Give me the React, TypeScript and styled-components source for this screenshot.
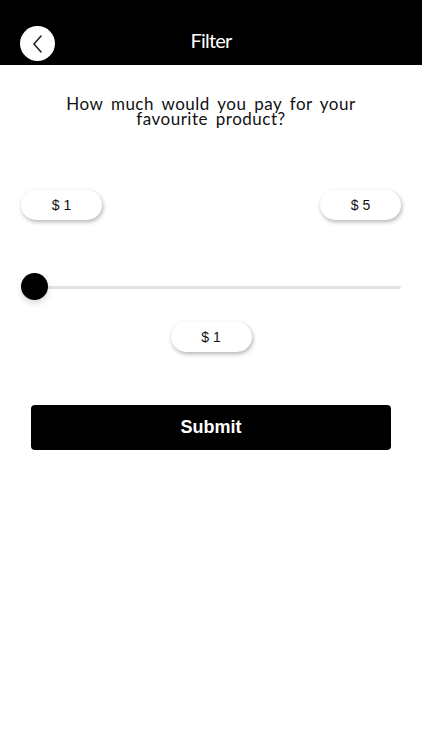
import styled, { createGlobalStyle } from 'styled-components'

const GlobalStyle = createGlobalStyle`
  html, body {
    margin: 0;
    padding: 0;
    background: #fff;
  }
  body {
    font-family: "Liberation Sans", Arial, sans-serif;
  }
`

const Header = styled.header`
  height: 65px;
  background: #000;
  display: grid;
  grid-template-columns: 74px 1fr 74px;
  align-items: end;
  padding-bottom: 4px;
  box-sizing: border-box;
`

const BackButton = styled.button`
  width: 35px;
  height: 35px;
  margin-left: 20px;
  border-radius: 50%;
  border: none;
  background: #fff;
  display: flex;
  align-items: center;
  justify-content: center;
  padding: 0;
`

const Title = styled.h1`
  margin: 0 0 3px;
  line-height: 35px;
  text-align: center;
  color: #fff;
  font-family: "Lato", sans-serif;
  font-weight: 400;
  font-size: 20px;
  letter-spacing: -0.8px;
`

const Question = styled.p`
  margin: 31px auto 0;
  width: 310px;
  text-align: center;
  font-family: "Lato", sans-serif;
  font-size: 17px;
  line-height: 15px;
  letter-spacing: 0.5px;
  word-spacing: 3px;
  color: #111;
`

const Range = styled.div`
  display: flex;
  justify-content: space-between;
  padding: 0 21px;
  margin-top: 64px;
`

const Pill = styled.div`
  width: 81px;
  height: 30px;
  border-radius: 15px;
  background: #fff;
  box-shadow: 1px 2px 4px rgba(0, 0, 0, 0.3);
  display: flex;
  align-items: center;
  justify-content: center;
  font-size: 14px;
  color: #111;
`

const Slider = styled.div`
  position: relative;
  margin: 53px 21px 0;
  height: 28px;
  display: flex;
  align-items: center;
`

const Track = styled.div`
  flex: 1;
  margin-left: 13px;
  height: 3px;
  background: #e3e3e3;
  border-radius: 2px;
`

const Thumb = styled.div`
  position: absolute;
  left: 0;
  top: 0;
  width: 27px;
  height: 27px;
  border-radius: 50%;
  background: #000;
  box-shadow: 0 3px 6px rgba(0, 0, 0, 0.15);
`

const ValueRow = styled.div`
  display: flex;
  justify-content: center;
  margin-top: 21px;
`

const SubmitButton = styled.button`
  display: block;
  margin: 53px 31px 0;
  width: 360px;
  height: 45px;
  border: none;
  border-radius: 4px;
  background: #000;
  color: #fff;
  font-family: "Liberation Sans", Arial, sans-serif;
  font-weight: 700;
  font-size: 18px;
`

export default function App() {
  return (
    <>
      <GlobalStyle />
      <Header>
        <BackButton aria-label="Back">
          <svg width="14" height="20" viewBox="0 0 14 20" fill="none">
            <path d="M10 2 L3 10 L10 18" stroke="#222" strokeWidth="1.6" strokeLinecap="round" strokeLinejoin="round" />
          </svg>
        </BackButton>
        <Title>Filter</Title>
        <div />
      </Header>
      <Question>How much would you pay for your favourite product?</Question>
      <Range>
        <Pill>$ 1</Pill>
        <Pill>$ 5</Pill>
      </Range>
      <Slider>
        <Thumb />
        <Track />
      </Slider>
      <ValueRow>
        <Pill>$ 1</Pill>
      </ValueRow>
      <SubmitButton>Submit</SubmitButton>
    </>
  )
}
